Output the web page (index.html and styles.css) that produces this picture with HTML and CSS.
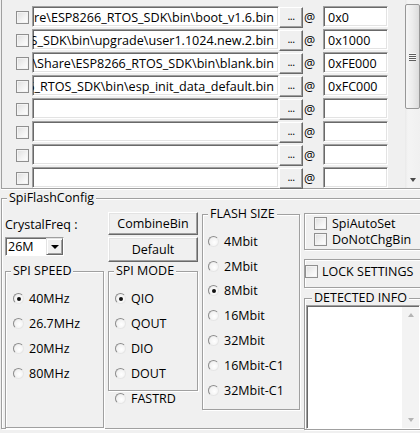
FILE: index.html
```html
<!DOCTYPE html>
<html>
<head>
<meta charset="utf-8">
<link rel="stylesheet" href="styles.css">
</head>
<body>
<div class="files">
  <div class="rows">
    <div class="row"><span class="cb"></span><div class="fld path"><span>re\ESP8266_RTOS_SDK\bin\boot_v1.6.bin</span></div><span class="dots">...</span><span class="at">@</span><div class="fld addr">0x0</div></div>
    <div class="row"><span class="cb"></span><div class="fld path"><span>ESP8266_RTOS_SDK\bin\upgrade\user1.1024.new.2.bin</span></div><span class="dots">...</span><span class="at">@</span><div class="fld addr">0x1000</div></div>
    <div class="row"><span class="cb"></span><div class="fld path"><span>D:\Share\ESP8266_RTOS_SDK\bin\blank.bin</span></div><span class="dots">...</span><span class="at">@</span><div class="fld addr">0xFE000</div></div>
    <div class="row"><span class="cb"></span><div class="fld path"><span>ESP8266_RTOS_SDK\bin\esp_init_data_default.bin</span></div><span class="dots">...</span><span class="at">@</span><div class="fld addr">0xFC000</div></div>
    <div class="row"><span class="cb"></span><div class="fld path"></div><span class="dots">...</span><span class="at">@</span><div class="fld addr"></div></div>
    <div class="row"><span class="cb"></span><div class="fld path"></div><span class="dots">...</span><span class="at">@</span><div class="fld addr"></div></div>
    <div class="row"><span class="cb"></span><div class="fld path"></div><span class="dots">...</span><span class="at">@</span><div class="fld addr"></div></div>
    <div class="row"><span class="cb"></span><div class="fld path"></div><span class="dots">...</span><span class="at">@</span><div class="fld addr"></div></div>
  </div>
  <div class="vscroll">
    <div class="thumb"><span class="grip"></span></div>
    <span class="sdown"></span>
  </div>
</div>

<div class="cfg">
  <span class="cap">SpiFlashConfig</span>
  <div class="col">
    <div class="lbl">CrystalFreq :</div>
    <div class="combo"><span class="cval">26M</span><span class="dd"><span class="tri"></span></span></div>
    <div class="grp speed">
      <span class="cap">SPI SPEED</span>
      <div class="rad"><span class="rb on"></span>40MHz</div>
      <div class="rad"><span class="rb"></span>26.7MHz</div>
      <div class="rad"><span class="rb"></span>20MHz</div>
      <div class="rad"><span class="rb"></span>80MHz</div>
    </div>
  </div>
  <div class="col">
    <div class="btn combine">CombineBin</div>
    <div class="btn deflt">Default</div>
    <div class="grp mode">
      <span class="cap">SPI MODE</span>
      <div class="rad"><span class="rb on"></span>QIO</div>
      <div class="rad"><span class="rb"></span>QOUT</div>
      <div class="rad"><span class="rb"></span>DIO</div>
      <div class="rad"><span class="rb"></span>DOUT</div>
    </div>
    <div class="rad fast"><span class="rb"></span>FASTRD</div>
  </div>
  <div class="col">
    <div class="grp flash">
      <span class="cap">FLASH SIZE</span>
      <div class="rad"><span class="rb"></span>4Mbit</div>
      <div class="rad"><span class="rb"></span>2Mbit</div>
      <div class="rad"><span class="rb on"></span>8Mbit</div>
      <div class="rad"><span class="rb"></span>16Mbit</div>
      <div class="rad"><span class="rb"></span>32Mbit</div>
      <div class="rad"><span class="rb"></span>16Mbit-C1</div>
      <div class="rad"><span class="rb"></span>32Mbit-C1</div>
    </div>
  </div>
  <div class="col">
    <div class="grp g1">
      <div class="chk"><span class="cb"></span>SpiAutoSet</div>
      <div class="chk"><span class="cb"></span>DoNotChgBin</div>
    </div>
    <div class="grp lock">
      <div class="chk"><span class="cb"></span>LOCK SETTINGS</div>
    </div>
    <div class="grp info">
      <span class="cap">DETECTED INFO</span>
      <div class="ta">
        <div class="tscroll"><span class="tup"></span><span class="tdown"></span></div>
      </div>
    </div>
  </div>
</div>
</body>
</html>
```

FILE: styles.css
```css
* { box-sizing: border-box; }

body {
  margin: 0;
  width: 420px;
  height: 433px;
  overflow: hidden;
  background: #f0f0f0;
  font-family: "Open Sans", "Noto Sans", sans-serif;
  font-size: 12.5px;
  color: #000;
}

/* ---------- file list ---------- */
.files {
  display: flex;
  height: 189px;
  margin-left: 1px;
  border-left: 1px solid #a0a0a0;
  border-bottom: 1px solid #a0a0a0;
  box-shadow: 0 1px 0 #fff;
}

.rows {
  width: 403px;
  padding: 6px 0 0 14px;
  display: flex;
  flex-direction: column;
  gap: 2px;
}

.row {
  display: flex;
  align-items: flex-start;
  height: 21px;
}

.cb {
  flex: none;
  width: 13px;
  height: 13px;
  border: 1px solid #8f8f8f;
  background: linear-gradient(135deg, #dedede 0%, #f4f4f4 60%, #ffffff 100%);
  box-shadow: inset 0 0 0 1px #f3f3f3;
}

.row .cb { margin-top: 5px; }

.fld {
  height: 21px;
  background: #fff;
  border: 1px solid;
  border-color: #a0a0a0 #fff #fff #a0a0a0;
  box-shadow: inset 1px 1px 0 #696969, inset -1px -1px 0 #e3e3e3;
  display: flex;
  align-items: center;
  overflow: hidden;
  white-space: nowrap;
  line-height: 15px;
  padding-top: 1px;
}

.path {
  width: 247px;
  margin-left: 3px;
  justify-content: flex-end;
  padding-right: 4px;
  padding-left: 2px;
  font-size: 12.6px;
}

.path span { flex: none; }

.addr {
  width: 65px;
  padding-left: 4px;
}

.dots {
  flex: none;
  width: 24px;
  height: 21px;
  margin-top: 1px;
  background: #f0f0f0;
  border: 1px solid;
  border-color: #fff #696969 #696969 #fff;
  box-shadow: inset -1px -1px 0 #a0a0a0;
  display: flex;
  align-items: center;
  justify-content: center;
  padding-bottom: 3px;
  font-size: 11px;
  letter-spacing: -0.5px;
  line-height: 12px;
}

.at {
  flex: none;
  width: 20px;
  padding-left: 1px;
  line-height: 21px;
  padding-top: 1px;
}

.vscroll {
  width: 15px;
  display: flex;
  flex-direction: column;
  align-items: center;
  background: linear-gradient(to right, #e9e9e9 0, #f4f4f4 3px, #f0f0f0 100%);
}

.thumb {
  align-self: stretch;
  margin-top: 4px;
  height: 105px;
  border: 1px solid #979797;
  border-radius: 2px;
  background: linear-gradient(to right, #f6f6f6 0%, #ececec 50%, #dcdcdc 100%);
  display: flex;
  align-items: center;
  justify-content: center;
}

.grip {
  width: 7px;
  height: 8px;
  background: repeating-linear-gradient(to bottom, #f8f8f8 0 1px, #5e5e5e 1px 2px);
}

.sdown {
  margin-top: auto;
  margin-bottom: 6px;
  width: 0;
  height: 0;
  border-left: 3.5px solid transparent;
  border-right: 3.5px solid transparent;
  border-top: 4px solid #4a4a4a;
}

/* ---------- config area ---------- */
.cfg {
  position: relative;
  margin: 9px 0 0 1px;
  width: 440px;
  height: 231px;
  border: 1px solid #a0a0a0;
  box-shadow: inset 1px 1px 0 #fff, 1px 1px 0 #fff;
  padding-left: 3px;
  display: grid;
  grid-template-columns: 99px 90px 98px 119px;
  column-gap: 4px;
  align-items: start;
}

.cap {
  position: absolute;
  top: -9px;
  left: 5px;
  padding: 0 2px;
  background: #f0f0f0;
  line-height: 15px;
  white-space: nowrap;
}

.grp {
  position: relative;
  border: 1px solid #a0a0a0;
  box-shadow: inset 1px 1px 0 #fff, 1px 1px 0 #fff;
}

.col { display: flex; flex-direction: column; }

.lbl {
  margin-top: 18px;
  line-height: 15px;
}

.combo {
  margin-top: 5px;
  width: 59px;
  height: 19px;
  background: #fff;
  border: 1px solid;
  border-color: #a0a0a0 #fff #fff #a0a0a0;
  box-shadow: inset 1px 1px 0 #696969;
  display: flex;
  align-items: center;
  justify-content: space-between;
}

.cval {
  padding-left: 2px;
  line-height: 15px;
}

.dd {
  width: 17px;
  height: 17px;
  background: #f0f0f0;
  border: 1px solid;
  border-color: #e3e3e3 #696969 #696969 #e3e3e3;
  box-shadow: inset 1px 1px 0 #fff, inset -1px -1px 0 #a0a0a0;
  display: flex;
  align-items: center;
  justify-content: center;
}

.tri {
  width: 0;
  height: 0;
  border-left: 4px solid transparent;
  border-right: 4px solid transparent;
  border-top: 4.5px solid #000;
  margin-top: 1px;
}

.speed {
  margin-top: 15px;
  height: 157px;
  padding: 14px 0 0 7px;
}

.rad {
  display: flex;
  align-items: center;
  height: 25px;
  white-space: nowrap;
}

.rb {
  flex: none;
  position: relative;
  width: 11px;
  height: 11px;
  margin-right: 5px;
  border-radius: 50%;
  border: 1px solid;
  border-color: #8c8c8c #e6e6e6 #e6e6e6 #8c8c8c;
  background: radial-gradient(circle at 60% 60%, #ffffff 0%, #f2f2f2 60%, #dcdcdc 100%);
}

.rb.on::after {
  content: "";
  position: absolute;
  left: 2.5px;
  top: 2.5px;
  width: 4px;
  height: 4px;
  border-radius: 50%;
  background: #111;
}

.btn {
  width: 90px;
  background: #f0f0f0;
  border: 1px solid;
  border-color: #fff #696969 #696969 #fff;
  box-shadow: inset -1px -1px 0 #a0a0a0, inset 1px 1px 0 #e3e3e3;
  display: flex;
  align-items: center;
  justify-content: center;
  line-height: 15px;
}

.combine {
  margin-top: 13px;
  height: 23px;
}

.deflt {
  margin-top: 2px;
  height: 25px;
}

.mode {
  margin-top: 9px;
  height: 120px;
  padding: 14px 0 0 6px;
}

.rad.fast {
  height: 15px;
  padding-left: 7px;
}

.flash {
  margin-top: 15px;
  height: 196px;
  padding: 14px 0 0 5px;
}

.flash .rad { height: 24.8px; }

.g1 {
  margin-top: 14px;
  height: 37px;
  padding: 1px 0 0 9px;
}

.chk {
  display: flex;
  align-items: center;
  height: 16px;
  white-space: nowrap;
}

.chk .cb { margin-right: 5px; }

.lock {
  margin-top: 9px;
  height: 29px;
  padding: 3px 0 0 0;
}

.lock .cb { margin-right: 4px; }

.info {
  margin-top: 10px;
  padding: 6px 0 0 1px;
}

.info .cap { left: 7px; }

.ta {
  width: 114px;
  height: 124px;
  background: #fff;
  border: 1px solid;
  border-color: #a0a0a0 #fff #fff #a0a0a0;
  box-shadow: inset 1px 1px 0 #696969;
  display: flex;
  justify-content: flex-end;
  padding-top: 1px;
}

.tscroll {
  width: 17px;
  background: #f3f3f3;
  display: flex;
  flex-direction: column;
  align-items: center;
  justify-content: space-between;
  padding: 6px 0 6px;
}

.tup {
  width: 0;
  height: 0;
  border-left: 3.5px solid transparent;
  border-right: 3.5px solid transparent;
  border-bottom: 4px solid #b4b4b4;
}

.tdown {
  width: 0;
  height: 0;
  border-left: 3.5px solid transparent;
  border-right: 3.5px solid transparent;
  border-top: 4px solid #b4b4b4;
}
```
